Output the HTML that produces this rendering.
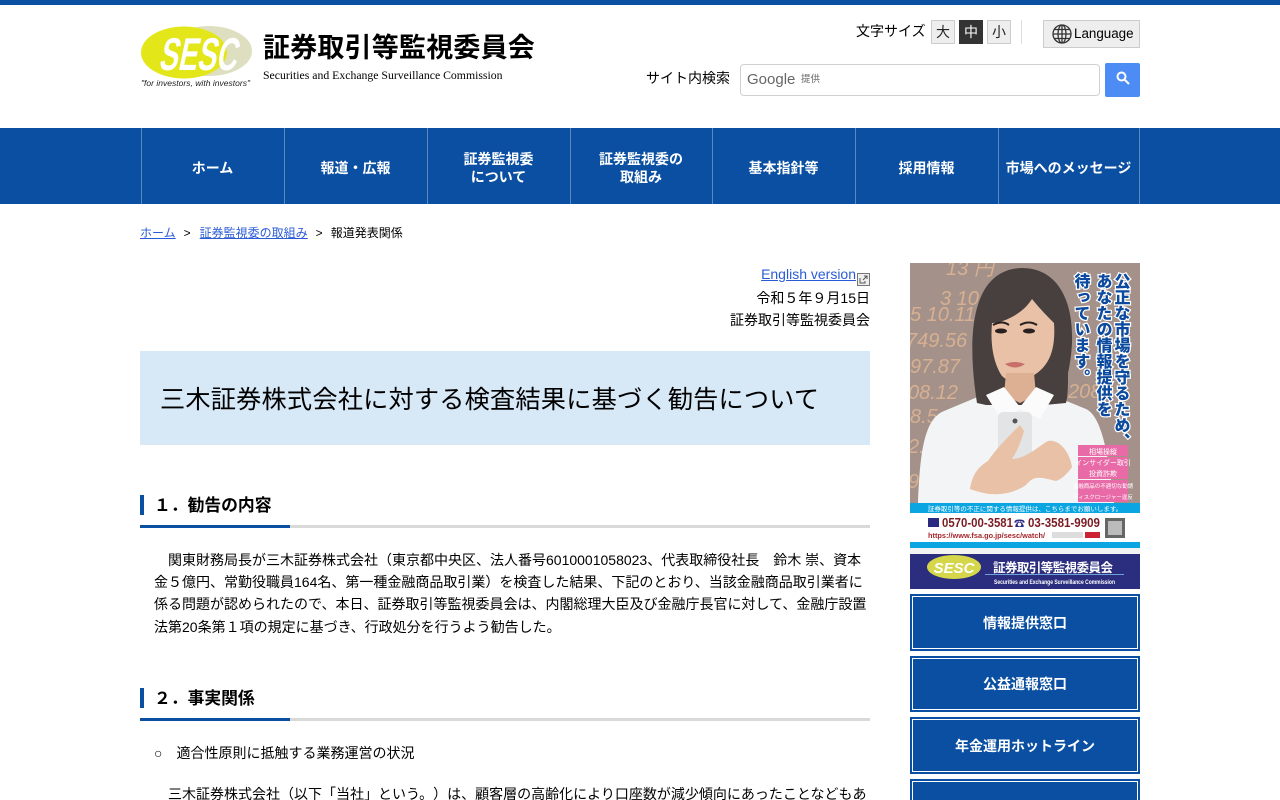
<!DOCTYPE html>
<html lang="ja"><head><meta charset="utf-8"><title>三木証券株式会社に対する検査結果に基づく勧告について</title>
<style>
html,body{margin:0;padding:0;background:#fff;height:800px;overflow:hidden}
body{width:1280px;position:relative;font-family:"Liberation Sans","Noto Sans CJK JP",sans-serif;text-spacing-trim:space-all;color:#000;font-size:14px}
#w{position:absolute;left:0;top:0;width:1280px;height:800px;overflow:hidden}
.a{position:absolute;white-space:nowrap}
a{color:#2a5bd7;text-decoration:underline}
.nav{position:absolute;top:128px;left:0;width:1280px;height:76px;background:#0a4fa1}
.sep{position:absolute;top:128px;width:1px;height:76px;background:#5d88bf}
.ni{position:absolute;top:130px;height:76px;display:flex;align-items:center;justify-content:center;text-align:center;color:#fff;font-weight:bold;line-height:18px;font-size:14px;white-space:nowrap}
.fs{position:absolute;top:20px;width:22px;height:22px;border:1px solid #ccc;background:#eee;text-align:center;line-height:23px;font-size:14px;color:#222}
.h2bar{position:absolute;left:140px;width:730px;height:3px;background:#d9d9d9}
.h2bar i{display:block;width:150px;height:3px;background:#0a4fa1}
.h2mark{position:absolute;left:140px;width:4px;height:20px;background:#0a4fa1}
.h2{position:absolute;left:154px;font-size:16.8px;font-weight:bold;white-space:nowrap;line-height:24px}
.t{position:absolute;left:154px;line-height:22.4px;white-space:nowrap;font-size:14px}
.btn{position:absolute;left:910px;width:230px;background:#0a4fa1;box-sizing:border-box;border:2px solid #0a4fa1;color:#fff;font-weight:bold;font-size:14px;display:flex;align-items:center;justify-content:center}
.btn:before{content:"";position:absolute;left:0;top:0;right:0;bottom:0;border:1px solid #fff;margin:0}
</style></head><body><div id="w">
<div class="a" style="left:0;top:0;width:1280px;height:5px;background:#0a4fa1"></div>

<svg class="a" style="left:140px;top:24px" width="116" height="66" viewBox="0 0 116 66">
<ellipse cx="69" cy="27" rx="43" ry="25" fill="#dedfc0"/>
<ellipse cx="44" cy="28.5" rx="43" ry="26" fill="#e3e619"/>
<text transform="translate(18 46) skewX(-12)" font-family="Liberation Sans" font-size="46" font-weight="bold" fill="#fff" textLength="78" lengthAdjust="spacingAndGlyphs">SESC</text>
<text x="1" y="62" font-family="Liberation Sans" font-size="8.5" font-style="italic" fill="#222" textLength="109">"for investors, with investors"</text>
</svg>
<div class="a" style="left:263px;top:33px;font-size:27px;font-weight:bold;line-height:30px;letter-spacing:.2px">証券取引等監視委員会</div>
<div class="a" style="left:263px;top:69px;font-family:'Liberation Serif',serif;font-size:11.75px;line-height:14px">Securities and Exchange Surveillance Commission</div>

<div class="a" style="left:856px;top:22px;font-size:14px;line-height:18px">文字サイズ</div>
<div class="fs" style="left:931px">大</div>
<div class="fs" style="left:959px;background:#333;color:#fff;border-color:#333">中</div>
<div class="fs" style="left:987px">小</div>
<div class="a" style="left:1021px;top:20px;width:1px;height:24px;background:#ddd"></div>
<div class="a" style="left:1043px;top:20px;width:95px;height:26px;border:1px solid #ccc;background:#eee"></div>
<svg class="a" style="left:1052px;top:24px" width="20" height="20" viewBox="0 0 20 20" fill="none" stroke="#333" stroke-width="1.3"><circle cx="10" cy="10" r="9"/><ellipse cx="10" cy="10" rx="4" ry="9"/><path d="M1 10h18M2.2 5.5h15.6M2.2 14.5h15.6M10 1v18"/></svg>
<div class="a" style="left:1074px;top:26px;font-size:13.4px;line-height:16px">Language</div>

<div class="a" style="left:646px;top:69px;font-size:14px;line-height:18px">サイト内検索</div>
<div class="a" style="left:740px;top:64px;width:358px;height:30px;border:1px solid #d0d0d0;border-radius:4px"></div>
<div class="a" style="left:747px;top:71px;font-size:15px;line-height:18px;color:#666">Google</div>
<div class="a" style="left:801px;top:74px;font-size:9.5px;line-height:12px;color:#666">提供</div>
<div class="a" style="left:1105px;top:63px;width:35px;height:34px;background:#4d8cf5;border-radius:2px"></div>
<svg class="a" style="left:1116px;top:71px" width="14" height="14" viewBox="0 0 14 14" fill="none" stroke="#fff" stroke-width="2"><circle cx="5.5" cy="5.5" r="4"/><path d="M8.5 8.5L13 13"/></svg>

<div class="nav"></div>
<div class="sep" style="left:141px"></div><div class="sep" style="left:284px"></div><div class="sep" style="left:427px"></div><div class="sep" style="left:570px"></div><div class="sep" style="left:712px"></div><div class="sep" style="left:855px"></div><div class="sep" style="left:998px"></div><div class="sep" style="left:1139px"></div>
<div class="ni" style="left:141px;width:143px">ホーム</div>
<div class="ni" style="left:284px;width:143px">報道・広報</div>
<div class="ni" style="left:427px;width:143px">証券監視委<br>について</div>
<div class="ni" style="left:570px;width:142px">証券監視委の<br>取組み</div>
<div class="ni" style="left:712px;width:143px">基本指針等</div>
<div class="ni" style="left:855px;width:143px">採用情報</div>
<div class="ni" style="left:998px;width:141px">市場へのメッセージ</div>

<div class="a" style="left:140px;top:225px;font-size:12px;line-height:16px"><a href="#">ホーム</a><span style="margin:0 9px 0 8px">&gt;</span><a href="#">証券監視委の取組み</a><span style="margin:0 8px">&gt;</span>報道発表関係</div>

<div class="a" style="right:424px;top:265px;font-size:14px;line-height:18px"><a href="#">English version</a></div>
<svg class="a" style="left:857px;top:273px" width="13" height="13" viewBox="0 0 13 13" fill="none" stroke="#555"><rect x=".5" y=".5" width="12" height="12" fill="#eee" stroke="#777"/><path d="M3 5v5h5V8M6 7l4-4M7 3h3v3"/></svg>
<div class="a" style="right:410px;top:289px;line-height:18px">令和５年９月15日</div>
<div class="a" style="right:410px;top:311px;line-height:18px">証券取引等監視委員会</div>

<div class="a" style="left:140px;top:351px;width:730px;height:94px;background:#d7e8f7"></div>
<div class="a" style="left:160px;top:382px;font-size:25.2px;line-height:36px;letter-spacing:.2px">三木証券株式会社に対する検査結果に基づく勧告について</div>

<div class="h2mark" style="top:495px"></div>
<div class="h2" style="top:494px">１．勧告の内容</div>
<div class="h2bar" style="top:525px"><i></i></div>
<div class="t" style="top:548.6px">　関東財務局長が三木証券株式会社（東京都中央区、法人番号6010001058023、代表取締役社長　鈴木 崇、資本<br>金５億円、常勤役職員164名、第一種金融商品取引業）を検査した結果、下記のとおり、当該金融商品取引業者に<br>係る問題が認められたので、本日、証券取引等監視委員会は、内閣総理大臣及び金融庁長官に対して、金融庁設置<br>法第20条第１項の規定に基づき、行政処分を行うよう勧告した。</div>

<div class="h2mark" style="top:688px"></div>
<div class="h2" style="top:687px">２．事実関係</div>
<div class="h2bar" style="top:718px"><i></i></div>
<div class="t" style="top:742px">○　適合性原則に抵触する業務運営の状況</div>
<div class="t" style="top:783px">　三木証券株式会社（以下「当社」という。）は、顧客層の高齢化により口座数が減少傾向にあったことなどもあ</div>

<svg class="a" style="left:910px;top:263px" width="230" height="326" viewBox="0 0 230 326">
<rect width="230" height="240" fill="#a3918a"/>
<g font-family="Liberation Sans" font-style="italic" font-size="20" fill="#e4b894" opacity=".8">
<text x="36" y="12">13 円</text><text x="30" y="42">3 10</text><text x="0" y="58">5 10.11</text><text x="-4" y="84">749.56</text><text x="0" y="110">97.87</text><text x="-2" y="136">08.12</text><text x="0" y="160">8.5</text><text x="-2" y="190">2.0</text><text x="-2" y="225">9</text><text x="158" y="135">208</text></g>
<path d="M8 240c2-50 6-84 26-92l48-20h50l44 18c18 8 24 60 28 94z" fill="#f3f4f6"/>
<path d="M67 140C56 70 62 6 112 5c44 0 58 50 46 105 0 12 0 22-2 30l-22 2H76z" fill="#48403f"/>
<path d="M82 60c10 0 30-8 40-24 8 10 16 18 22 24 2 30-6 48-30 57-12 3-18 0-22-4-8-12-12-30-10-53z" fill="#e8c1a6"/>
<path d="M96 110l-2 22 16 8 16-8-2-22z" fill="#ddb094"/>
<path d="M76 132l18-8 16 20 16-20 18 8-14 24-20-10-18 12z" fill="#fbfbfc"/>
<path d="M83 62q9-5 16 0M110 62q9-5 17 0" stroke="#2a2020" stroke-width="2" fill="none"/><ellipse cx="91" cy="68" rx="6" ry="2.5" fill="#2a2020"/><ellipse cx="119" cy="68" rx="6" ry="2.5" fill="#2a2020"/>
<path d="M95 101q10-4 20 0q-10 7-20 0z" fill="#c96f69"/>
<rect x="88" y="149" width="34" height="50" rx="5" fill="#e3e4e6"/><circle cx="105" cy="158" r="2.5" fill="#555"/>
<path d="M60 226c2-14 8-22 18-28 8-12 18-22 32-36l4 6c-4 14-8 22-12 28 14 0 28-14 36-18 12-2 22 12 24 26-4 6-10 12-16 14-16-4-22-6-30 4-12 8-30 14-56 4z" fill="#e8c1a6"/>
<g font-family="Liberation Sans,Noto Sans CJK JP,sans-serif" fill="#0b4a9e" stroke="#fff" stroke-width="2.4" paint-order="stroke" font-weight="900" font-size="16" style="writing-mode:vertical-rl">
<text x="210" y="10">公正な市場を守るため、</text><text x="192" y="10">あなたの情報提供を</text><text x="170" y="10">待っています。</text></g>
<g fill="#e86aa6"><rect x="168" y="182" width="50" height="11"/><rect x="168" y="194" width="50" height="11"/><rect x="168" y="205" width="50" height="11"/><rect x="168" y="217" width="50" height="11"/><rect x="168" y="228" width="50" height="11"/></g>
<g fill="#fff" font-size="7" text-anchor="middle"><text x="193" y="191">相場操縦</text><text x="193" y="202">インサイダー取引</text><text x="193" y="213">投資詐欺</text><text x="193" y="225" font-size="5.5">金融商品の不適切な勧誘</text><text x="193" y="236" font-size="5.5">ディスクロージャー違反</text></g>
<rect y="240" width="230" height="10" fill="#0ba5e2"/><text x="115" y="248" font-size="6.5" fill="#fff" text-anchor="middle">証券取引等の不正に関する情報提供は、こちらまでお願いします。</text>
<rect y="250" width="230" height="29" fill="#fff"/>
<rect x="18" y="255" width="11" height="9" fill="#2a2a80"/>
<text x="32" y="264" font-size="12.5" font-weight="bold" fill="#7a1c24" textLength="71" lengthAdjust="spacingAndGlyphs">0570-00-3581</text>
<text x="104" y="264" font-size="11" fill="#2a2a80">☎</text>
<text x="118" y="264" font-size="12.5" font-weight="bold" fill="#7a1c24" textLength="72" lengthAdjust="spacingAndGlyphs">03-3581-9909</text>
<text x="18" y="275" font-size="7.5" font-weight="bold" fill="#a6262a" textLength="117" lengthAdjust="spacingAndGlyphs">https://www.fsa.go.jp/sesc/watch/</text>
<rect x="142" y="269" width="31" height="6" fill="#ddd"/><rect x="175" y="269" width="15" height="6" fill="#c23"/>
<rect x="195" y="255" width="20" height="20" fill="#666"/><rect x="198" y="258" width="14" height="14" fill="#bbb"/>
<rect y="279" width="230" height="6" fill="#0ba5e2"/>
<rect y="285" width="230" height="6" fill="#f3f3f3"/>
<rect y="291" width="230" height="35" fill="#2b2d7e"/>
<ellipse cx="44" cy="304" rx="27" ry="12" fill="#d6d64a"/><text x="44" y="310" font-size="15" font-weight="bold" font-style="italic" fill="#fff" text-anchor="middle">SESC</text>
<text x="83" y="309" font-size="12.5" fill="#fff" textLength="120" font-weight="bold">証券取引等監視委員会</text><rect x="75" y="311" width="139" height="1" fill="#6fa0d8"/>
<text x="84" y="321" font-size="6.5" font-weight="bold" fill="#fff" textLength="121" lengthAdjust="spacingAndGlyphs">Securities and Exchange Surveillance Commission</text>
</svg>
<div class="btn" style="top:594px;height:57px">情報提供窓口</div>
<div class="btn" style="top:656px;height:56px">公益通報窓口</div>
<div class="btn" style="top:717px;height:57px">年金運用ホットライン</div>
<div class="btn" style="top:779px;height:57px"></div>
</div></body></html>
